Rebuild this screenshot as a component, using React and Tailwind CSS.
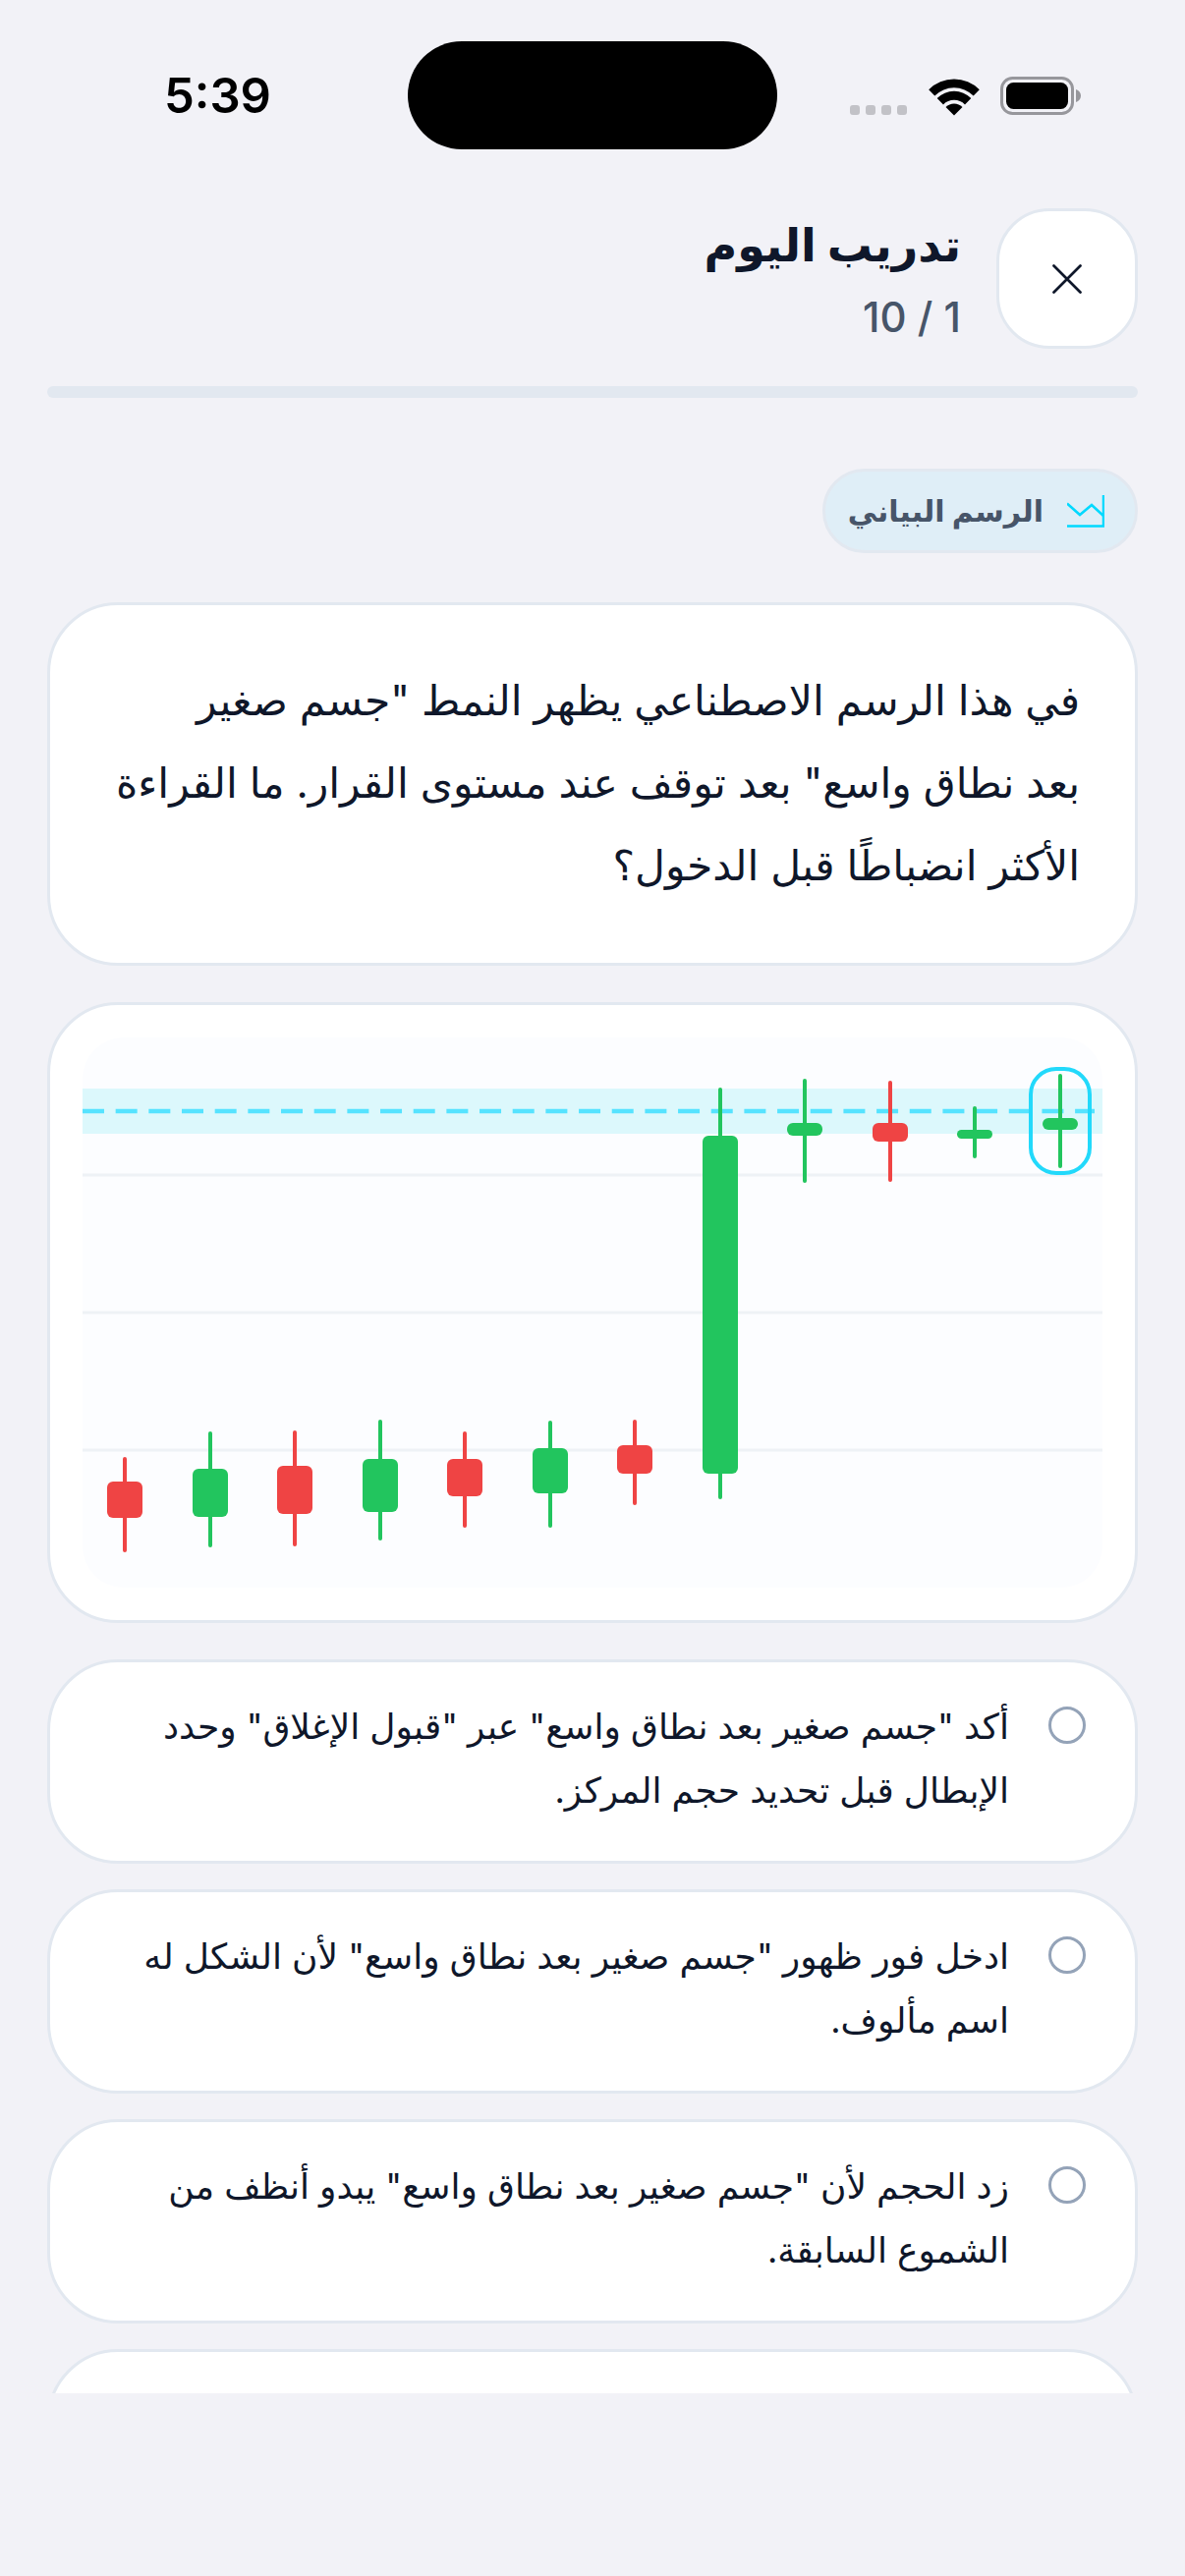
const candles = [
  { x: 43, top: 429, bottom: 522, open: 452, close: 489, up: false },
  { x: 130, top: 403, bottom: 517, open: 439, close: 488, up: true },
  { x: 216, top: 402, bottom: 516, open: 436, close: 485, up: false },
  { x: 303, top: 391, bottom: 510, open: 429, close: 483, up: true },
  { x: 389, top: 403, bottom: 497, open: 429, close: 467, up: false },
  { x: 476, top: 392, bottom: 497, open: 418, close: 464, up: true },
  { x: 562, top: 391, bottom: 474, open: 415, close: 444, up: false },
  { x: 649, top: 53, bottom: 468, open: 100, close: 444, up: true },
  { x: 735, top: 44, bottom: 146, open: 87, close: 100, up: true },
  { x: 822, top: 46, bottom: 145, open: 87, close: 106, up: false },
  { x: 908, top: 72, bottom: 121, open: 94, close: 103, up: true },
  { x: 995, top: 39, bottom: 131, open: 82, close: 94, up: true },
];

const options = [
  ['أكد "جسم صغير بعد نطاق واسع" عبر "قبول الإغلاق" وحدد', 'الإبطال قبل تحديد حجم المركز.'],
  ['ادخل فور ظهور "جسم صغير بعد نطاق واسع" لأن الشكل له', 'اسم مألوف.'],
  ['زد الحجم لأن "جسم صغير بعد نطاق واسع" يبدو أنظف من', 'الشموع السابقة.'],
];

const StatusBar = () => (
  <div dir="ltr" className="relative flex h-[212px] items-start">
    <span className="ml-[167px] mt-[67px] text-[49px] font-semibold leading-[62px] text-black">5:39</span>
    <div className="absolute left-[415px] top-[42px] h-[110px] w-[376px] rounded-[55px] bg-black"></div>
    <div className="ml-auto mr-[105px] mt-[78px] flex items-end">
      <div className="mb-[1px] flex gap-[6px]">
        {[0, 1, 2, 3].map((i) => (
          <div key={i} className="h-[10px] w-[10px] rounded-[3px] bg-[#c2c2c7]"></div>
        ))}
      </div>
      <svg className="ml-[22px]" width="52" height="38" viewBox="-0.5 0 52 38">
        <path d="M-0.3 11.2A36.5 36.5 0 0 1 51.3 11.2L45.2 17.6A27.5 27.5 0 0 0 5.8 17.6Z" fill="#000" />
        <path d="M8.2 20A24.5 24.5 0 0 1 42.8 20L36.5 26.4A15.5 15.5 0 0 0 14.5 26.4Z" fill="#000" />
        <path d="M17 29A12 12 0 0 1 34 29L25.5 37.5Z" fill="#000" />
      </svg>
      <svg className="ml-[21px]" width="83" height="40" viewBox="0 0 83 40">
        <rect x="1.5" y="1.5" width="72" height="36" rx="11" fill="none" stroke="#97979c" strokeWidth="3" />
        <rect x="6" y="6" width="63" height="27" rx="7.5" fill="#000" />
        <path d="M77 13c3 1 5 3.500 5 6.500s-2 5.500-5 6.500z" fill="#97979c" />
      </svg>
    </div>
  </div>
);

const Candle = ({ x, top, bottom, open, close, up }) => {
  const color = up ? '#22c55e' : '#ef4444';
  return (
    <g>
      <line x1={x} x2={x} y1={top} y2={bottom} stroke={color} strokeWidth="4" strokeLinecap="round" />
      <rect x={x - 18} y={open} width="36" height={close - open} rx={Math.min(6, (close - open) / 2)} fill={color} />
    </g>
  );
};

const Chart = () => (
  <svg className="block h-[560px] w-full" viewBox="0 0 1038 560">
    <rect width="1038" height="560" rx="42" fill="#fcfdff" />
    <rect y="52" width="1038" height="46" fill="#dcf8fc" />
    {[140, 280, 420].map((y) => (
      <line key={y} x1="0" x2="1038" y1={y} y2={y} stroke="#eef2f6" strokeWidth="3" />
    ))}
    <line x1="0" x2="1030" y1="75" y2="75" stroke="#56e3ff" strokeWidth="4.500" strokeDasharray="22 11.670" />
    {candles.map((c) => (
      <Candle key={c.x} {...c} />
    ))}
    <rect x="965" y="32" width="60" height="106" rx="26" fill="none" stroke="#22d9fb" strokeWidth="4" />
  </svg>
);

const Option = ({ lines }) => (
  <div className="flex h-[208px] shrink-0 gap-[40px] rounded-[72px] border-[3px] border-[#e2e8f0] bg-white pr-[50px] pt-[33px]">
    <div className="mt-[12px] h-[38px] w-[38px] rounded-full border-[3px] border-[#94a3b8]"></div>
    <p className="whitespace-nowrap text-[36px] leading-[65px] text-[#0f172a]">
      {lines[0]}
      <br />
      {lines[1]}
    </p>
  </div>
);

export default function App() {
  return (
    <div className="h-[2622px] w-[1206px] overflow-hidden bg-[#f2f2f7] font-['Inter','DejaVu_Sans',sans-serif]">
      <StatusBar />
      <div dir="rtl" className="h-[2224px] overflow-hidden px-[48px]">
        {/* Header */}
        <div className="flex h-[143px] items-center gap-[36px]">
          <button className="flex h-[143px] w-[144px] items-center justify-center rounded-[54px] border-[3px] border-[#e2e8f0] bg-white">
            <svg width="30" height="30" viewBox="0 0 30 30" fill="none" stroke="#0f172a" strokeWidth="2.700" strokeLinecap="round">
              <path d="M1.500 1.500 28.500 28.500M28.500 1.500 1.500 28.500" />
            </svg>
          </button>
          <div className="flex flex-col gap-[17px]">
            <h1 className="text-[46px] font-bold leading-[62px] text-[#0f172a]">تدريب اليوم</h1>
            <p className="text-[42px] font-medium leading-[52px] text-[#475569]">1 / 10</p>
          </div>
        </div>

        <div className="mt-[38px] h-[12px] rounded-full bg-[#e2e8f0]"></div>

        {/* Tag */}
        <div className="mt-[72px] flex h-[86px] w-[321px] items-center gap-[24px] rounded-full border-[3px] border-[#e2e8f0] bg-[#dfeef7] pr-[31px]">
          <svg width="38" height="33" viewBox="0 0 38 33" fill="none" stroke="#00d9ff" strokeWidth="2.500">
            <path d="M37 0V31.500H0" />
            <path d="M0 8.500 13 20 25 10 37 21" />
          </svg>
          <span className="whitespace-nowrap text-[30px] font-bold text-[#475569]">الرسم البياني</span>
        </div>

        {/* Question */}
        <div className="mt-[50px] h-[370px] rounded-[72px] border-[3px] border-[#e2e8f0] bg-white px-[56px] py-[55px]">
          <p className="whitespace-nowrap text-[42.500px] leading-[84px] text-[#0f172a]">
            في هذا الرسم الاصطناعي يظهر النمط "جسم صغير
            <br />
            بعد نطاق واسع" بعد توقف عند مستوى القرار. ما القراءة
            <br />
            الأكثر انضباطًا قبل الدخول؟
          </p>
        </div>

        <div className="mt-[37px] rounded-[72px] border-[3px] border-[#e2e8f0] bg-white p-[33px]">
          <Chart />
        </div>

        {/* Answers */}
        <div className="mt-[37px] flex flex-col gap-[26px]">
          {options.map((lines) => (
            <Option key={lines[0]} lines={lines} />
          ))}
          <div className="h-[208px] shrink-0 rounded-[72px] border-[3px] border-[#e2e8f0] bg-white"></div>
        </div>
      </div>
    </div>
  );
}
